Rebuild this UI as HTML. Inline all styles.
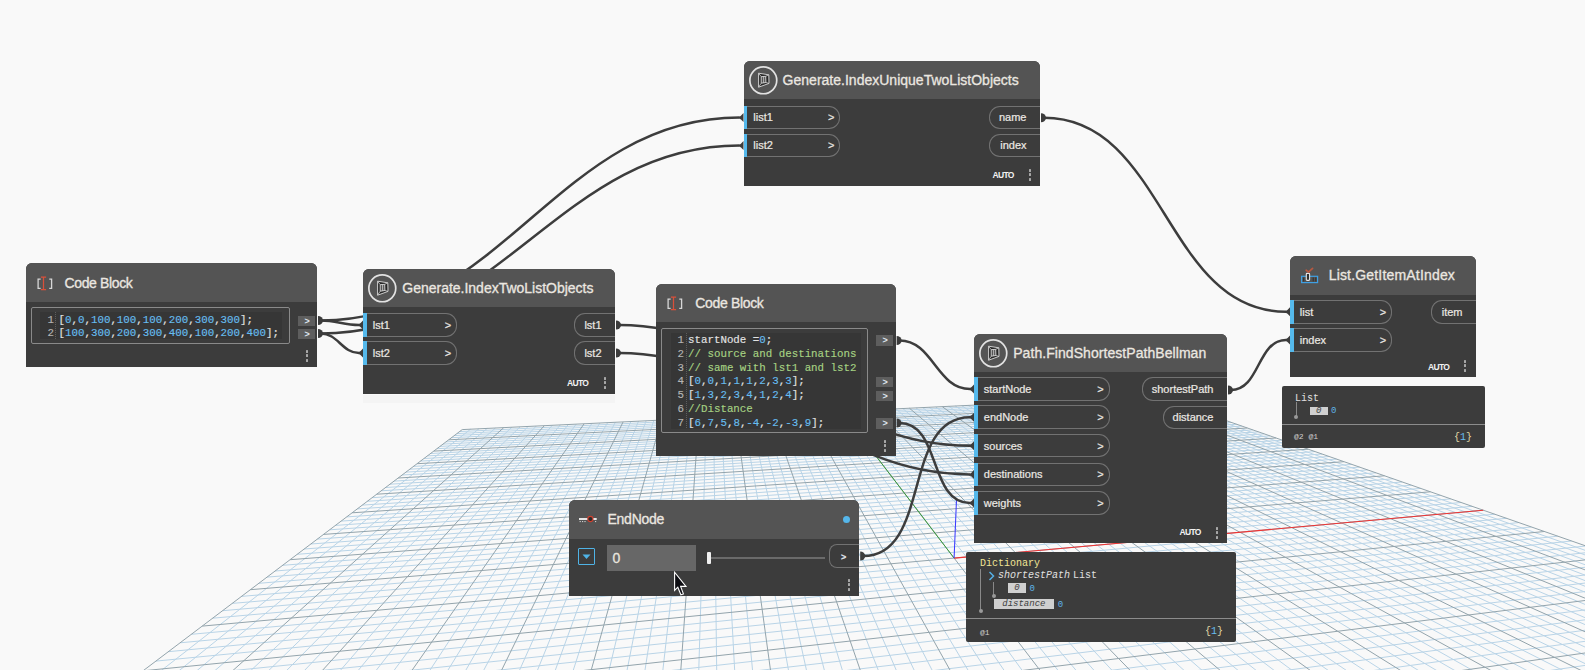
<!DOCTYPE html><html><head><meta charset="utf-8"><style>
*{box-sizing:border-box}
html,body{margin:0;padding:0}
body{width:1585px;height:670px;overflow:hidden;background:#f9f9f9;position:relative;font-family:"Liberation Sans",sans-serif}
svg{position:absolute;left:0;top:0;overflow:visible}
.n{position:absolute;background:#3c3c3c;border-radius:6px 6px 0 0}
.h{position:absolute;left:0;top:0;right:0;background:#545454;border-radius:6px 6px 0 0}
.t{position:absolute;color:#ebe7e0;font-size:14px;white-space:nowrap;line-height:16px;-webkit-text-stroke:0.3px #ebe7e0}
.pi,.po{position:absolute;height:23.5px;border:1px solid #727272;color:#ece9e4;font-size:11px;line-height:21.5px;white-space:nowrap;-webkit-text-stroke:0.2px #ece9e4}
.pi{border-left:none;border-radius:0 11px 11px 0}
.pi:before{content:'';position:absolute;left:0;top:-1px;bottom:-1px;width:3.8px;background:#55b9ec}
.pi b{position:absolute;right:4.8px;top:0.8px;font-weight:normal;font-size:11px}
.pi span{position:absolute;left:9.8px;top:0.8px}
.po{border-right:none;border-radius:11px 0 0 11px;text-align:right;padding-right:13.5px;padding-top:0.8px}
.auto{position:absolute;color:#f2f2f2;font-size:8.5px;font-weight:bold;line-height:10px;letter-spacing:-0.68px}
.dots{position:absolute;width:3px}
.dots i{display:block;width:2px;height:2.6px;background:#a8a8a8;margin-bottom:1.9px;border-radius:0.5px}
.code{position:absolute;border:1px solid #8a8a8a;border-radius:2px}
.ed{position:absolute;background:#363636}
.mono{font-family:"Liberation Mono",monospace;font-size:10.8px;white-space:pre;position:absolute;color:#e2e2e2;-webkit-text-stroke:0.15px currentColor}
.ln{color:#b5b5b5;text-align:right}
.sep{position:absolute;border-left:1px dotted #5e5e5e}
.num{color:#66bdf0}
.com{color:#a6d283}
.cp{position:absolute;width:16.5px;height:10.5px;background:#5e5e5e;color:#dfe6f0;font-size:9px;font-weight:bold;line-height:11px;text-align:center;padding-left:2px}
.prev{position:absolute;background:#3c3c3c;border-radius:2px}
.pm{font-family:"Liberation Mono",monospace;position:absolute;white-space:pre;color:#e0e0e0;font-size:10px;line-height:12px}
.badge{position:absolute;background:#d0d0d0;color:#404040;font-family:"Liberation Mono",monospace;font-style:italic;font-size:9px;line-height:10px;text-align:center}
</style></head><body>
<svg width="1585" height="670" viewBox="0 0 1585 670">
<path d="M47.4 759.4L470.6 429.2M69.1 759.4L478.9 428.8M90.7 759.3L487.2 428.4M111.5 760.0L495.4 428.1M154.9 759.9L511.8 427.3M176.6 759.8L520.0 426.9M198.3 759.7L528.1 426.5M219.9 759.7L536.2 426.1M263.3 759.5L552.3 425.3M284.9 759.5L560.3 424.9M306.6 759.4L568.2 424.6M328.3 759.3L576.2 424.2M371.1 759.9L591.9 423.4M392.8 759.9L599.8 423.1M414.5 759.8L607.6 422.7M436.2 759.8L615.3 422.3M479.5 759.6L630.8 421.6M1791.7 759.9L1899.6 739.2M501.2 759.6L638.5 421.2M1684.8 759.9L1899.7 720.2M522.8 759.5L646.1 420.8M1577.9 759.9L1899.8 702.6M544.5 759.4L653.8 420.5M1471.1 759.9L1899.9 686.2M587.8 759.3L668.9 419.7M1257.8 760.0L1899.5 656.9M609.4 760.0L676.4 419.4M1151.2 760.0L1876.2 647.2M631.1 759.9L683.9 419.0M1045.6 759.9L1850.9 638.4M652.7 759.8L691.4 418.7M939.2 759.9L1826.8 630.0M696.1 759.7L706.3 418.0M726.5 759.9L1781.4 614.2M717.8 759.7L713.6 417.6M620.2 759.9L1760.1 606.7M739.5 759.6L721.0 417.3M514.0 760.0L1739.6 599.6M761.1 759.5L728.3 416.9M407.9 760.0L1719.9 592.7M804.5 759.4L742.9 416.2M197.0 759.9L1682.6 579.7M826.2 759.3L750.2 415.9M91.1 759.9L1665.0 573.6M847.8 759.3L757.4 415.5M32.4 754.5L1648.1 567.7M869.7 759.9L764.6 415.2M50.8 740.6L1631.7 562.0M913.1 759.8L778.9 414.5M84.7 714.9L1600.6 551.1M934.8 759.7L786.0 414.1M100.4 703.1L1585.8 546.0M956.5 759.7L793.0 413.8M115.3 691.8L1571.5 541.0M978.1 759.6L800.1 413.5M129.5 681.1L1557.7 536.2M1021.5 759.5L814.1 412.8M156.0 661.1L1531.3 527.0M1043.2 759.4L821.1 412.5M168.3 651.7L1518.7 522.6M1064.8 759.4L828.1 412.1M180.2 642.8L1506.5 518.3M1086.5 759.3L835.0 411.8M191.5 634.3L1494.7 514.2M1130.4 759.9L848.7 411.1M212.7 618.2L1472.0 506.3M1152.1 759.8L855.6 410.8M222.7 610.7L1461.2 502.5M1173.8 759.8L862.4 410.5M232.3 603.4L1450.7 498.9M1195.5 759.7L869.2 410.2M241.5 596.4L1440.4 495.3M1238.9 759.6L882.7 409.5M258.9 583.3L1420.8 488.4M1260.6 759.5L889.4 409.2M267.2 577.1L1411.3 485.2M1282.2 759.5L896.1 408.9M275.1 571.0L1402.1 482.0M1303.9 759.4L902.8 408.5M282.8 565.3L1393.2 478.8M1348.1 760.0L916.1 407.9M297.3 554.3L1376.0 472.8M1369.8 759.9L922.7 407.6M304.2 549.0L1367.7 469.9M1391.5 759.9L929.2 407.3M310.9 544.0L1359.6 467.1M1413.2 759.8L935.8 407.0M317.4 539.1L1351.7 464.4M1456.6 759.7L948.8 406.3M329.7 529.8L1336.5 459.1M1478.3 759.6L955.3 406.0M335.6 525.4L1329.1 456.5M1500.0 759.5L961.8 405.7M341.3 521.1L1322.0 454.0M1521.7 759.5L968.2 405.4M346.8 516.9L1315.0 451.6M1565.0 759.4L981.0 404.8M357.4 508.9L1301.4 446.9M1586.7 759.3L987.3 404.5M362.4 505.1L1294.9 444.6M1609.7 760.0L993.7 404.2M367.3 501.3L1288.5 442.3M1631.4 759.9L1000.0 403.9M372.1 497.7L1282.2 440.2M1674.7 759.8L1012.6 403.3M381.3 490.8L1270.1 435.9M1696.4 759.7L1018.8 403.0M385.7 487.5L1264.2 433.9M1718.1 759.6L1025.0 402.7M390.0 484.2L1258.5 431.9M1739.8 759.6L1031.2 402.4M394.2 481.1L1252.9 429.9M1783.2 759.4L1043.6 401.8M402.2 475.0L1241.9 426.1M1804.9 759.4L1049.7 401.5M406.1 472.1L1236.6 424.3M1826.6 759.3L1055.8 401.2M409.9 469.2L1231.5 422.5M1849.8 760.0L1061.9 400.9M413.5 466.4L1226.4 420.7M1893.2 759.9L1074.1 400.3M420.6 461.1L1216.5 417.2M1899.8 753.3L1080.1 400.1M424.1 458.5L1211.7 415.6M1899.7 744.1L1086.1 399.8M427.4 455.9L1207.0 413.9M1899.6 735.2L1092.1 399.5M430.7 453.5L1202.3 412.3M1899.4 718.4L1104.0 398.9M437.0 448.7L1193.4 409.2M1899.3 710.4L1110.0 398.6M440.0 446.4L1189.0 407.7M1899.2 702.7L1115.9 398.3M443.0 444.1L1184.7 406.2M1899.1 695.2L1121.8 398.1M445.9 441.9L1180.5 404.7M1898.9 681.0L1133.5 397.5M451.6 437.7L1172.3 401.8M1898.8 674.2L1139.3 397.2M454.3 435.6L1168.3 400.4M1898.7 667.6L1145.1 396.9M457.0 433.6L1164.3 399.1M1900.0 661.7L1150.9 396.7M459.6 431.6L1160.5 397.7" stroke="#b9d4e7" stroke-width="1" fill="none"/>
<path d="M25.7 759.5L462.2 429.6M133.2 759.9L503.7 427.7M241.6 759.6L544.3 425.7M349.9 759.3L584.1 423.8M457.8 759.7L623.1 421.9M1897.9 760.0L1899.4 759.7M566.2 759.4L661.3 420.1M1364.4 759.9L1899.4 671.1M674.4 759.8L698.8 418.3M832.8 759.9L1803.6 621.9M782.8 759.5L735.6 416.5M303.0 759.9L1700.9 586.1M891.4 759.9L771.7 414.8M68.2 727.4L1615.9 556.5M999.8 759.6L807.1 413.1M143.1 670.8L1544.3 531.5M1108.7 760.0L841.9 411.5M202.3 626.1L1483.2 510.2M1217.2 759.6L876.0 409.8M250.4 589.7L1430.4 491.8M1325.6 759.3L909.4 408.2M290.2 559.7L1384.5 475.8M1434.9 759.7L942.3 406.7M323.6 534.4L1344.0 461.7M1543.4 759.4L974.6 405.1M352.2 512.8L1308.1 449.2M1653.1 759.8L1006.3 403.6M376.8 494.2L1276.1 438.0M1761.5 759.5L1037.4 402.1M398.2 478.0L1247.3 428.0M1871.5 759.9L1068.0 400.6M417.1 463.7L1221.4 418.9M1899.5 726.7L1098.1 399.2M433.9 451.1L1197.8 410.7M1899.0 688.0L1127.6 397.8M448.8 439.8L1176.3 403.2M1899.9 655.4L1156.7 396.4M462.2 429.6L1156.7 396.4" stroke="#93a4ac" stroke-width="1" fill="none"/>
<path d="M954.1 558.1L1483.2 510.2" stroke="#ee3535" stroke-width="1.15"/>
<path d="M954.1 558.1L841.9 411.5" stroke="#3a9a3a" stroke-width="1"/>
<path d="M954.1 558.1L956.5 499.3" stroke="#3b3bff" stroke-width="1.05"/>
<g fill="none" stroke="#3d3d3d" stroke-width="2.5"><path d="M321.0 320.5C335.9 320.5 344.1 325.0 359.0 325.0"/><path d="M321.0 333.5C337.7 333.5 342.3 353.0 359.0 353.0"/><path d="M321.0 320.5C502.4 320.5 558.1 117.5 739.5 117.5"/><path d="M321.0 333.5C499.9 333.5 560.6 145.5 739.5 145.5"/><path d="M619.0 325.0C763.8 325.0 825.2 445.8 970.0 445.8"/><path d="M619.0 353.0C763.8 353.0 825.2 474.4 970.0 474.4"/><path d="M899.6 340.5C932.9 340.5 936.7 389.0 970.0 389.0"/><path d="M899.6 423.0C941.2 423.0 928.4 503.0 970.0 503.0"/><path d="M863.2 556.0C931.5 556.0 901.7 417.3 970.0 417.3"/><path d="M1044.0 117.7C1165.0 117.7 1165.0 311.8 1286.0 311.8"/><path d="M1231.0 390.0C1260.0 390.0 1257.0 340.0 1286.0 340.0"/></g>
<g fill="#3c3c3c"><path d="M896.6 418.5A5 4.5 0 0 1 896.6 427.5Z"/><path d="M616.0 320.5A5 4.5 0 0 1 616.0 329.5Z"/><path d="M1041.0 113.2A5 4.5 0 0 1 1041.0 122.2Z"/><path d="M616.0 348.5A5 4.5 0 0 1 616.0 357.5Z"/><path d="M860.2 551.5A5 4.5 0 0 1 860.2 560.5Z"/><path d="M318.0 316.0A5 4.5 0 0 1 318.0 325.0Z"/><path d="M318.0 329.0A5 4.5 0 0 1 318.0 338.0Z"/><path d="M1228.0 385.5A5 4.5 0 0 1 1228.0 394.5Z"/><path d="M896.6 336.0A5 4.5 0 0 1 896.6 345.0Z"/><path d="M1290.0 335.5L1290.0 344.5Q1288.0 341.5 1284.0 340.0Q1288.0 338.5 1290.0 335.5Z"/><path d="M974.0 441.3L974.0 450.3Q972.0 447.3 968.0 445.8Q972.0 444.3 974.0 441.3Z"/><path d="M363.0 320.5L363.0 329.5Q361.0 326.5 357.0 325.0Q361.0 323.5 363.0 320.5Z"/><path d="M1290.0 307.3L1290.0 316.3Q1288.0 313.3 1284.0 311.8Q1288.0 310.3 1290.0 307.3Z"/><path d="M743.5 113.0L743.5 122.0Q741.5 119.0 737.5 117.5Q741.5 116.0 743.5 113.0Z"/><path d="M974.0 384.5L974.0 393.5Q972.0 390.5 968.0 389.0Q972.0 387.5 974.0 384.5Z"/><path d="M363.0 348.5L363.0 357.5Q361.0 354.5 357.0 353.0Q361.0 351.5 363.0 348.5Z"/><path d="M743.5 141.0L743.5 150.0Q741.5 147.0 737.5 145.5Q741.5 144.0 743.5 141.0Z"/><path d="M974.0 469.9L974.0 478.9Q972.0 475.9 968.0 474.4Q972.0 472.9 974.0 469.9Z"/><path d="M974.0 412.8L974.0 421.8Q972.0 418.8 968.0 417.3Q972.0 415.8 974.0 412.8Z"/><path d="M974.0 498.5L974.0 507.5Q972.0 504.5 968.0 503.0Q972.0 501.5 974.0 498.5Z"/></g>
</svg>
<div class="n" style="left:26px;top:263px;width:291px;height:104px"><div class="h" style="height:38.8px"></div></div><svg style="left:35px;top:276px" width="18" height="16"><path d="M5.6 3.2H3.1V12.4H5.6 M14.3 3.2H16.6V12.4H14.3" fill="none" stroke="#d6d6d6" stroke-width="1.3"/><path d="M8.5 1V13.7 M5.9 1H11.1 M5.9 13.7H11.1" stroke="#d9503a" stroke-width="1.25"/></svg><div class="t" style="left:64.5px;top:274.67px;font-size:14px;letter-spacing:-0.36px">Code Block</div><div class="code" style="left:31px;top:307px;width:259px;height:37px"></div><div class="ed" style="left:40px;top:311.5px;width:242px;height:27.5px"></div><div class="mono ln" style="left:42px;top:314px;width:12px;line-height:13px">1
2</div><div class="sep" style="left:55px;top:312px;height:27px"></div><div class="mono" style="left:58.5px;top:314px;line-height:13px">[<span class="num">0</span>,<span class="num">0</span>,<span class="num">100</span>,<span class="num">100</span>,<span class="num">100</span>,<span class="num">200</span>,<span class="num">300</span>,<span class="num">300</span>];
[<span class="num">100</span>,<span class="num">300</span>,<span class="num">200</span>,<span class="num">300</span>,<span class="num">400</span>,<span class="num">100</span>,<span class="num">200</span>,<span class="num">400</span>];</div><div class="cp" style="left:298px;top:315.5px">&gt;</div><div class="cp" style="left:298px;top:328.5px">&gt;</div><div class="dots" style="left:306px;top:350px"><i></i><i></i><i></i></div><div style="position:absolute;left:363px;top:395px;width:252px;height:8px;background:#f4f4f4"></div><div class="n" style="left:363px;top:269px;width:252px;height:125px"><div class="h" style="height:38px"></div></div><svg style="left:367.2px;top:272.7px" width="30.6" height="30.6"><circle cx="15.3" cy="15.3" r="13.450000000000001" fill="none" stroke="#e2e2e2" stroke-width="1.7"/><g transform="translate(15.3,15.3)" stroke-linejoin="round"><path d="M-4.7 -7.1L5.5 -5.5L5.7 3.1L-4.7 6.9Z M-2.1 -3.6L2.4 -4L2.6 2.2L-2.1 2.9Z" fill="#262626" fill-rule="evenodd" stroke="#dcdcdc" stroke-width="0.9"/><path d="M-4.7 -7.1L-2.1 -3.6 M5.5 -5.5L2.4 -4 M5.7 3.1L2.6 2.2 M-4.7 6.9L-2.1 2.9 M0.3 -3.8V2.6" fill="none" stroke="#cfcfcf" stroke-width="0.8"/></g></svg><div class="t" style="left:402.3px;top:279.87px;font-size:14px;letter-spacing:-0.01px">Generate.IndexTwoListObjects</div><div class="pi" style="left:363px;top:313.3px;width:94px"><span>lst1</span><b>&gt;</b></div><div class="pi" style="left:363px;top:341.3px;width:94px"><span>lst2</span><b>&gt;</b></div><div class="po" style="left:574px;top:313.3px;width:41px">lst1</div><div class="po" style="left:574px;top:341.3px;width:41px">lst2</div><div class="auto" style="left:567px;top:378px">AUTO</div><div class="dots" style="left:603.5px;top:377px"><i></i><i></i><i></i></div><div class="n" style="left:743.5px;top:61px;width:296.5px;height:125px"><div class="h" style="height:38px"></div></div><svg style="left:747.7px;top:64.7px" width="30.6" height="30.6"><circle cx="15.3" cy="15.3" r="13.450000000000001" fill="none" stroke="#e2e2e2" stroke-width="1.7"/><g transform="translate(15.3,15.3)" stroke-linejoin="round"><path d="M-4.7 -7.1L5.5 -5.5L5.7 3.1L-4.7 6.9Z M-2.1 -3.6L2.4 -4L2.6 2.2L-2.1 2.9Z" fill="#262626" fill-rule="evenodd" stroke="#dcdcdc" stroke-width="0.9"/><path d="M-4.7 -7.1L-2.1 -3.6 M5.5 -5.5L2.4 -4 M5.7 3.1L2.6 2.2 M-4.7 6.9L-2.1 2.9 M0.3 -3.8V2.6" fill="none" stroke="#cfcfcf" stroke-width="0.8"/></g></svg><div class="t" style="left:782.6px;top:71.77px;font-size:14px;letter-spacing:0.01px">Generate.IndexUniqueTwoListObjects</div><div class="pi" style="left:743.5px;top:105.5px;width:96.7px"><span>list1</span><b>&gt;</b></div><div class="pi" style="left:743.5px;top:133.5px;width:96.7px"><span>list2</span><b>&gt;</b></div><div class="po" style="left:989px;top:105.5px;width:51px">name</div><div class="po" style="left:989px;top:133.5px;width:51px">index</div><div class="auto" style="left:992.5px;top:170px">AUTO</div><div class="dots" style="left:1028.5px;top:169px"><i></i><i></i><i></i></div><div class="n" style="left:655.8px;top:284.2px;width:239.8px;height:172px"><div class="h" style="height:38px"></div></div><svg style="left:665px;top:296px" width="18" height="16"><path d="M5.6 3.2H3.1V12.4H5.6 M14.3 3.2H16.6V12.4H14.3" fill="none" stroke="#d6d6d6" stroke-width="1.3"/><path d="M8.5 1V13.7 M5.9 1H11.1 M5.9 13.7H11.1" stroke="#d9503a" stroke-width="1.25"/></svg><div class="t" style="left:695.3px;top:294.97px;font-size:14px;letter-spacing:-0.34px">Code Block</div><div class="code" style="left:661px;top:328px;width:207px;height:105px"></div><div class="ed" style="left:671px;top:332.5px;width:189.5px;height:96px"></div><div class="mono ln" style="left:672px;top:333.9px;width:12px;line-height:13.83px">1
2
3
4
5
6
7</div><div class="sep" style="left:685.5px;top:333px;height:95px"></div><div class="mono" style="left:688px;top:333.9px;line-height:13.83px">startNode =<span class="num">0</span>;
<span class="com">// source and destinations</span>
<span class="com">// same with lst1 and lst2</span>
[<span class="num">0</span>,<span class="num">0</span>,<span class="num">1</span>,<span class="num">1</span>,<span class="num">1</span>,<span class="num">2</span>,<span class="num">3</span>,<span class="num">3</span>];
[<span class="num">1</span>,<span class="num">3</span>,<span class="num">2</span>,<span class="num">3</span>,<span class="num">4</span>,<span class="num">1</span>,<span class="num">2</span>,<span class="num">4</span>];
<span class="com">//Distance</span>
[<span class="num">6</span>,<span class="num">7</span>,<span class="num">5</span>,<span class="num">8</span>,<span class="num">-4</span>,<span class="num">-2</span>,<span class="num">-3</span>,<span class="num">9</span>];</div><div class="cp" style="left:876px;top:335.2px">&gt;</div><div class="cp" style="left:876px;top:376.9px">&gt;</div><div class="cp" style="left:876px;top:390.6px">&gt;</div><div class="cp" style="left:876px;top:418.2px">&gt;</div><div class="dots" style="left:884px;top:440px"><i></i><i></i><i></i></div><div class="n" style="left:974px;top:333.5px;width:253px;height:209.5px"><div class="h" style="height:38.5px"></div></div><svg style="left:977.7px;top:337.7px" width="30.6" height="30.6"><circle cx="15.3" cy="15.3" r="13.450000000000001" fill="none" stroke="#e2e2e2" stroke-width="1.7"/><g transform="translate(15.3,15.3)" stroke-linejoin="round"><path d="M-4.7 -7.1L5.5 -5.5L5.7 3.1L-4.7 6.9Z M-2.1 -3.6L2.4 -4L2.6 2.2L-2.1 2.9Z" fill="#262626" fill-rule="evenodd" stroke="#dcdcdc" stroke-width="0.9"/><path d="M-4.7 -7.1L-2.1 -3.6 M5.5 -5.5L2.4 -4 M5.7 3.1L2.6 2.2 M-4.7 6.9L-2.1 2.9 M0.3 -3.8V2.6" fill="none" stroke="#cfcfcf" stroke-width="0.8"/></g></svg><div class="t" style="left:1013.2px;top:344.97px;font-size:14px;letter-spacing:0.06px">Path.FindShortestPathBellman</div><div class="pi" style="left:974px;top:377.1px;width:135.5px"><span>startNode</span><b>&gt;</b></div><div class="pi" style="left:974px;top:405.3px;width:135.5px"><span>endNode</span><b>&gt;</b></div><div class="pi" style="left:974px;top:433.9px;width:135.5px"><span>sources</span><b>&gt;</b></div><div class="pi" style="left:974px;top:462.6px;width:135.5px"><span>destinations</span><b>&gt;</b></div><div class="pi" style="left:974px;top:491.1px;width:135.5px"><span>weights</span><b>&gt;</b></div><div class="po" style="left:1142px;top:377.3px;width:85px">shortestPath</div><div class="po" style="left:1163px;top:405.7px;width:64px">distance</div><div class="auto" style="left:1179.5px;top:526.5px">AUTO</div><div class="dots" style="left:1215.5px;top:527px"><i></i><i></i><i></i></div><div class="n" style="left:1290px;top:256px;width:185.5px;height:120.5px"><div class="h" style="height:38.7px"></div></div><svg style="left:1296px;top:262px" width="28" height="26"><rect x="5.6" y="14.3" width="16" height="6.3" fill="none" stroke="#3fa0e4" stroke-width="1.2"/><path d="M7.7 15.5V19.5 M17.2 15.5V19.5 M19.8 15.5V19.5" stroke="#2e2e2e" stroke-width="1"/><rect x="10.3" y="11.4" width="3.3" height="7" rx="0.8" fill="#303030" stroke="#e6e6e6" stroke-width="1.1"/><path d="M10.1 8.2L12.4 10.2L16.6 6.3" fill="none" stroke="#b85840" stroke-width="1.7" stroke-linecap="round"/></svg><div class="t" style="left:1328.7px;top:266.57px;font-size:14px;letter-spacing:0.18px">List.GetItemAtIndex</div><div class="pi" style="left:1290px;top:300.2px;width:102px"><span>list</span><b>&gt;</b></div><div class="pi" style="left:1290px;top:328.4px;width:102px"><span>index</span><b>&gt;</b></div><div class="po" style="left:1431px;top:300.2px;width:45px">item</div><div class="auto" style="left:1428px;top:361.5px">AUTO</div><div class="dots" style="left:1464px;top:360px"><i></i><i></i><i></i></div><div class="prev" style="left:1282px;top:386px;width:203px;height:62px"></div><div style="position:absolute;left:1282px;top:424px;width:203px;height:1px;background:#8c8c8c"></div><div class="pm" style="left:1295px;top:392.8px">List</div><div style="position:absolute;left:1295.5px;top:402px;width:1px;height:14px;background:#888"></div><div style="position:absolute;left:1294px;top:414.5px;width:4px;height:4px;border-radius:2px;background:#999"></div><div class="badge" style="left:1310px;top:406.5px;width:17.5px;height:8px;line-height:8px">0</div><div class="pm" style="left:1331px;top:405px;color:#5fb4e8;font-size:9px">0</div><div class="pm" style="left:1294px;top:431px;font-size:8px;color:#cfcfcf">@2 @1</div><div class="pm" style="left:1454px;top:431.5px;font-size:10px;color:#e0d9a8">{<span class="num">1</span>}</div><div class="n" style="left:569px;top:500px;width:290px;height:95.5px"><div class="h" style="height:39px"></div></div><svg style="left:577px;top:514px" width="22" height="11"><path d="M2 5H19.7" stroke="#eeeeee" stroke-width="1.9"/><path d="M2.6 7.6H9 M18 7.6H19.2" stroke="#d8d8d8" stroke-width="1" stroke-dasharray="1.2 1.2"/><circle cx="13.4" cy="5" r="2.6" fill="#2a2a2a" stroke="#d0402e" stroke-width="1.1"/></svg><div class="t" style="left:607.5px;top:511.47px;font-size:14px;letter-spacing:-0.26px">EndNode</div><div style="position:absolute;left:842.7px;top:516px;width:7.2px;height:7.2px;border-radius:50%;background:#55b6ea"></div><div style="position:absolute;left:578.2px;top:548px;width:16.5px;height:16.5px;border:1.5px solid #4fb3e6;border-radius:1px"></div><svg style="left:582px;top:554px" width="9" height="6"><path d="M0.5 0.5H8.5L4.5 5Z" fill="#4fb3e6"/></svg><div style="position:absolute;left:607.4px;top:544.5px;width:89px;height:26.7px;background:#676767"></div><div class="t" style="left:612.5px;top:550px;font-size:14px;color:#e8e4dc">0</div><div style="position:absolute;left:709px;top:557px;width:116px;height:1.8px;background:#6a6a6a"></div><div style="position:absolute;left:706.8px;top:552.2px;width:4.2px;height:11.8px;background:#f0f0f0;border-radius:1px"></div><div class="po" style="left:829px;top:544px;width:30.2px;height:23.5px;font-size:9px;font-weight:bold;padding-right:13px;padding-top:2.2px;border-radius:8px 0 0 8px;color:#dfe6f5">&gt;</div><div class="dots" style="left:848.2px;top:579px"><i></i><i></i><i></i></div><div class="prev" style="left:966px;top:552px;width:270px;height:90px"></div><div style="position:absolute;left:966px;top:617.5px;width:270px;height:1.2px;background:#8c8c8c"></div><div class="pm" style="left:980px;top:557.6px;color:#f0e596">Dictionary</div><div style="position:absolute;left:980px;top:569px;width:1.2px;height:42px;background:#8a8a8a"></div><div style="position:absolute;left:978.5px;top:609px;width:4px;height:4px;border-radius:2px;background:#9a9a9a"></div><svg style="left:988px;top:571px" width="8" height="10"><path d="M1.5 1L5.5 5L1.5 9" fill="none" stroke="#55b0e6" stroke-width="1.5"/></svg><div class="pm" style="left:998px;top:569.5px;font-style:italic">shortestPath</div><div class="pm" style="left:1073px;top:569.5px">List</div><div style="position:absolute;left:993px;top:582px;width:1px;height:13px;background:#888"></div><div style="position:absolute;left:991.5px;top:593.5px;width:4px;height:4px;border-radius:2px;background:#999"></div><div class="badge" style="left:1008px;top:583.2px;width:17.7px;height:9.8px">0</div><div class="pm" style="left:1029.5px;top:583px;color:#5fb4e8;font-size:9px">0</div><div class="badge" style="left:994px;top:599px;width:59.7px;height:9.9px">distance</div><div class="pm" style="left:1057.7px;top:599px;color:#5fb4e8;font-size:9px">0</div><div class="pm" style="left:980px;top:626.5px;font-size:8px;color:#cfcfcf">@1</div><div class="pm" style="left:1205px;top:626.3px;font-size:10px;color:#e0d9a8">{<span class="num">1</span>}</div><svg style="left:673px;top:571px" width="16" height="26"><path d="M1.6 1.2V19.4L4.8 16.2L7.9 23.8L10.4 22.9L7.6 15.4H13Z" fill="#0d0d12" stroke="#fff" stroke-width="1.1" stroke-linejoin="miter"/></svg>
</body></html>
